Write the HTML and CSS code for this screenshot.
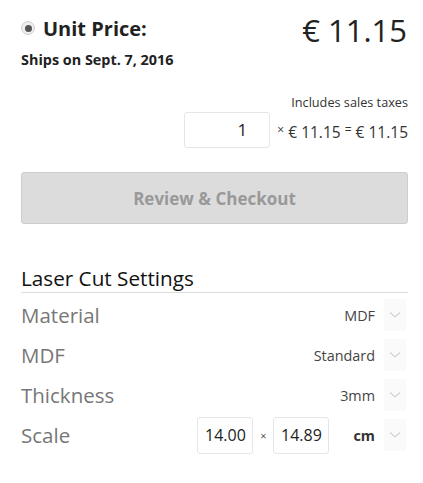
FILE: index.html
```html
<!DOCTYPE html>
<html>
<head>
<meta charset="utf-8">
<link rel="stylesheet" href="styles.css">
</head>
<body>
<div class="panel">
  <div class="price-head">
    <div class="price-left">
      <div class="unit-title"><span class="radio"><span class="radio-dot"></span></span><span>Unit Price:</span></div>
      <div class="ships">Ships on Sept. 7, 2016</div>
    </div>
    <div class="price-big">€ 11.15</div>
  </div>
  <div class="taxes">Includes sales taxes</div>
  <div class="qty-row">
    <div class="qty-input">1</div>
    <div class="qty-calc"><span class="op">×</span> € 11.15 <span class="op">=</span> € 11.15</div>
  </div>
  <div class="checkout">Review &amp; Checkout</div>
  <h2 class="settings-title">Laser Cut Settings</h2>
  <div class="settings">
    <div class="row">
      <div class="label">Material</div>
      <div class="control"><span class="value">MDF</span><span class="chev"><svg width="12" height="8" viewBox="0 0 12 8"><path d="M1 1.5 L6 6 L11 1.5" fill="none" stroke="#d4d4d4" stroke-width="1.3"/></svg></span></div>
    </div>
    <div class="row">
      <div class="label">MDF</div>
      <div class="control"><span class="value">Standard</span><span class="chev"><svg width="12" height="8" viewBox="0 0 12 8"><path d="M1 1.5 L6 6 L11 1.5" fill="none" stroke="#d4d4d4" stroke-width="1.3"/></svg></span></div>
    </div>
    <div class="row">
      <div class="label">Thickness</div>
      <div class="control"><span class="value">3mm</span><span class="chev"><svg width="12" height="8" viewBox="0 0 12 8"><path d="M1 1.5 L6 6 L11 1.5" fill="none" stroke="#d4d4d4" stroke-width="1.3"/></svg></span></div>
    </div>
    <div class="row">
      <div class="label">Scale</div>
      <div class="control">
        <span class="dim">14.00</span><span class="times">×</span><span class="dim">14.89</span>
        <span class="value unit">cm</span><span class="chev"><svg width="12" height="8" viewBox="0 0 12 8"><path d="M1 1.5 L6 6 L11 1.5" fill="none" stroke="#d4d4d4" stroke-width="1.3"/></svg></span>
      </div>
    </div>
  </div>
</div>
</body>
</html>
```
FILE: styles.css
```css
* { box-sizing: border-box; }
body {
  margin: 0;
  background: #fff;
  font-family: "Open Sans", Lato, sans-serif;
  color: #222;
}
.panel {
  padding: 12px 15px 0 21px;
}
.price-head {
  display: flex;
  justify-content: space-between;
  align-items: flex-start;
}
.unit-title {
  display: flex;
  align-items: center;
  gap: 8px;
  font-size: 20px;
  font-weight: 700;
  color: #222;
  height: 32px;
}
.radio {
  width: 14px;
  height: 14px;
  border-radius: 50%;
  background: #eee;
  border: 1px solid #cfcfcf;
  display: flex;
  align-items: center;
  justify-content: center;
}
.radio-dot {
  width: 7px;
  height: 7px;
  border-radius: 50%;
  background: #555;
}
.ships {
  font-size: 14.4px;
  font-weight: 700;
  color: #222;
  margin-top: 6px;
}
.price-big {
  font-size: 31px;
  color: #222;
  line-height: 40px;
  margin-top: -2px;
  margin-right: 1px;
}
.taxes {
  text-align: right;
  font-size: 12.7px;
  color: #333;
  margin-top: 24px;
}
.qty-row {
  display: flex;
  justify-content: flex-end;
  align-items: center;
  gap: 7px;
  margin-top: 1px;
}
.qty-input {
  width: 86px;
  height: 36px;
  border: 1px solid #e6e6e6;
  border-radius: 3px;
  text-align: right;
  padding-right: 22px;
  font-size: 17px;
  line-height: 34px;
  color: #222;
}
.qty-calc {
  font-size: 15.5px;
  color: #333;
  padding-top: 4px;
}
.op { font-size: 12px; vertical-align: 4px; }
.checkout {
  margin-top: 24px;
  height: 52px;
  background: #dcdcdc;
  border: 1px solid #cdcdcd;
  border-radius: 3px;
  display: flex;
  align-items: center;
  justify-content: center;
  font-size: 17px;
  font-weight: 700;
  color: #999;
}
.settings-title {
  margin: 40px 0 0;
  font-size: 20.7px;
  font-weight: 400;
  color: #111;
  padding-bottom: 0px;
  border-bottom: 1px solid #dcdcdc;
}
.settings {
  display: flex;
  flex-direction: column;
  padding-top: 2px;
}
.row {
  display: flex;
  justify-content: space-between;
  align-items: center;
  height: 40px;
}
.label {
  font-size: 20.5px;
  color: #777;
}
.control {
  display: flex;
  align-items: center;
}
.value {
  font-size: 14.4px;
  color: #444;
  margin-right: 9px;
}
.unit { font-weight: 700; color: #333; margin-left: 24px; }
.chev {
  width: 22px;
  height: 32px;
  background: #fafafa;
  display: flex;
  align-items: center;
  justify-content: center;
  margin-right: 2px;
}
.dim {
  width: 56px;
  height: 37px;
  border: 1px solid #e6e6e6;
  border-radius: 3px;
  font-size: 16px;
  color: #222;
  display: flex;
  align-items: center;
  justify-content: center;
}
.times {
  font-size: 11px;
  color: #555;
  width: 20px;
  text-align: center;
}
```
